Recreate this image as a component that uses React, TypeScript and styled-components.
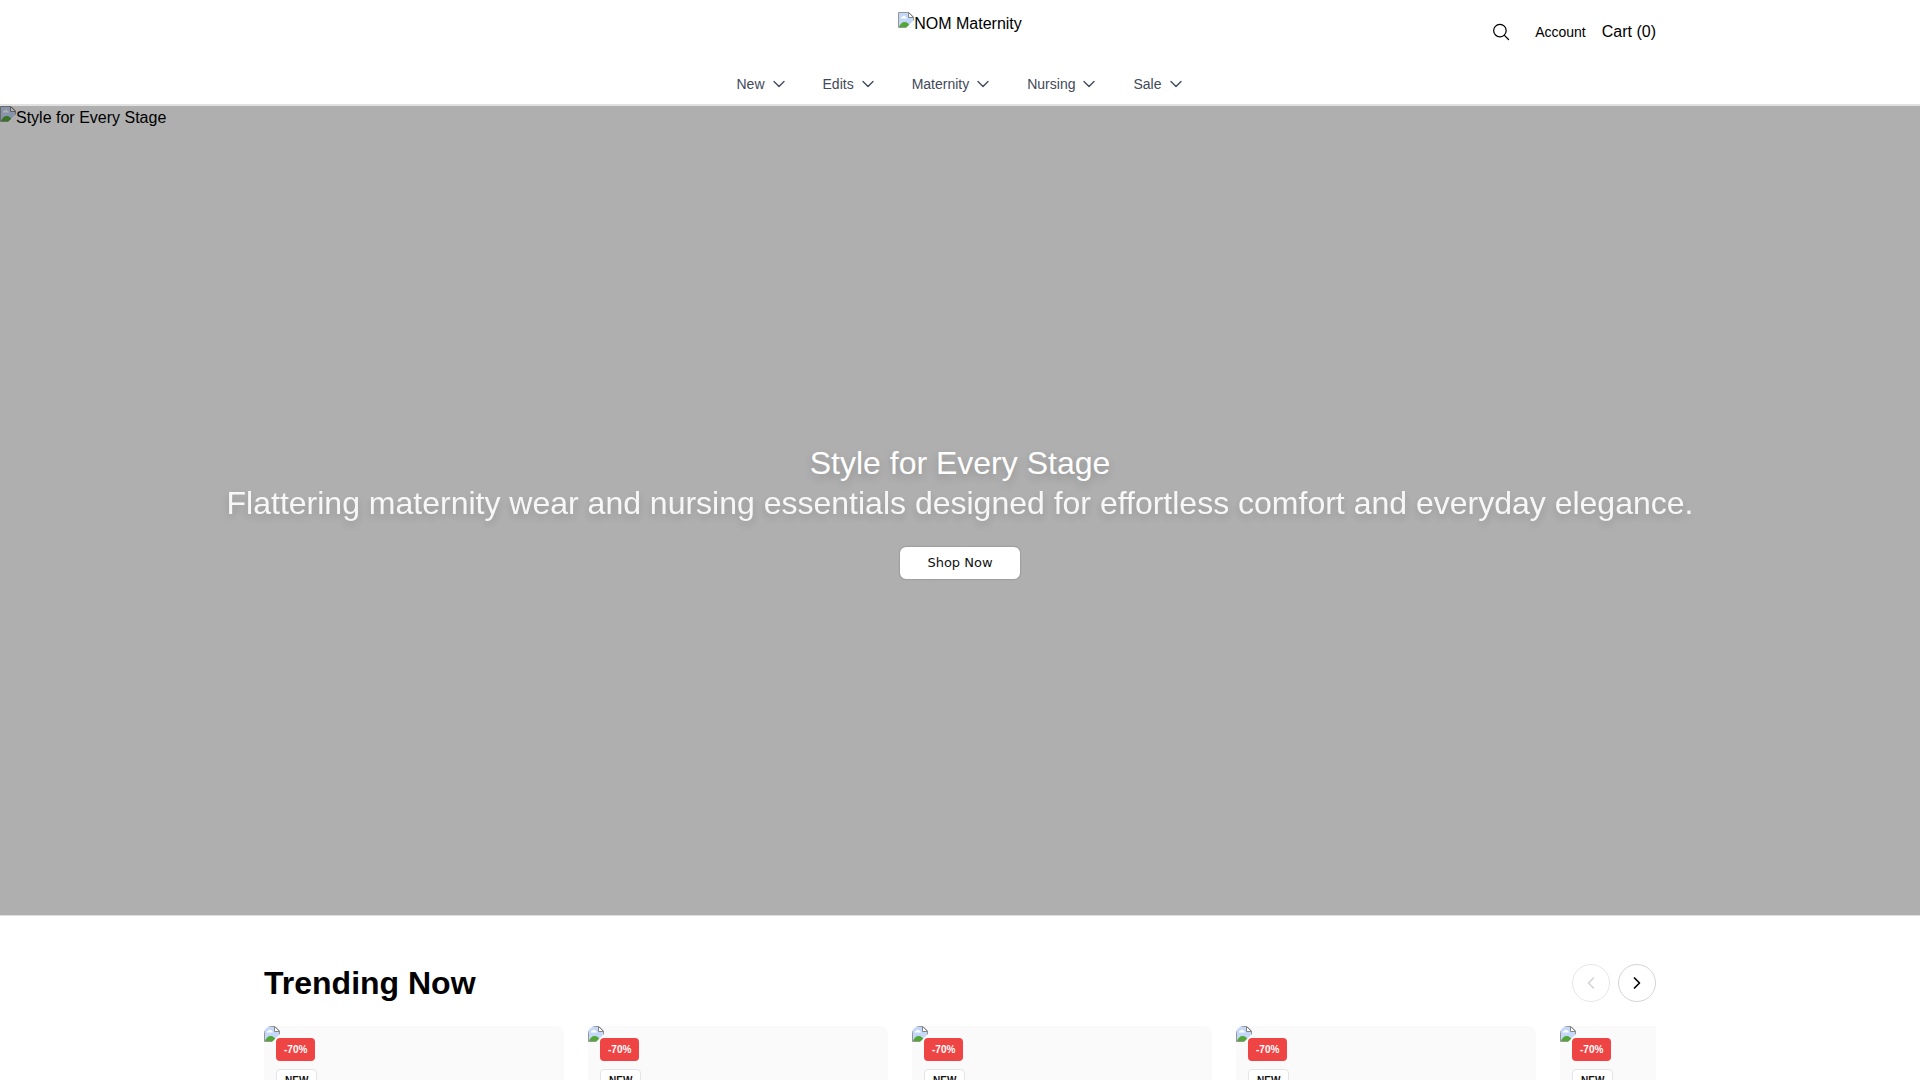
import React from "react";
import styled, { createGlobalStyle } from "styled-components";

const GlobalStyle = createGlobalStyle`
  *, *::before, *::after { box-sizing: border-box; }
  body {
    margin: 0;
    background: #fff;
    color: #000;
    font-family: "Liberation Sans", Arial, sans-serif;
    font-size: 16px;
    line-height: 24px;
  }
  h1, h2, p, ul { margin: 0; padding: 0; }
  button { font-family: inherit; cursor: pointer; }
  a { color: inherit; text-decoration: none; }
  html { scrollbar-width: none; }
`;

const Container = styled.div`
  width: 100%;
  max-width: 1440px;
  margin: 0 auto;
  padding: 0 24px;
`;

const Header = styled.header`
  background: #fff;
  border-bottom: 2px solid #e1e1e1;
`;

const TopBar = styled(Container)`
  display: grid;
  grid-template-columns: 1fr auto 1fr;
  align-items: center;
  height: 64px;
`;

const Logo = styled.a`
  grid-column: 2;
  display: flex;
  height: 40px;
`;

const Missing = styled.span`
  display: flex;
  align-items: flex-start;
`;

const MissingIcon = styled.svg`
  display: block;
  flex: none;
  width: 16px;
  height: 16px;
`;

const Actions = styled.div`
  display: flex;
  align-items: center;
  justify-content: flex-end;
  gap: 16px;
`;

const SearchButton = styled.button`
  display: flex;
  padding: 8px;
  border: 0;
  background: none;
  color: #000;
`;

const AccountLink = styled.a`
  font-size: 14px;
`;

const CartButton = styled.button`
  padding: 0;
  border: 0;
  background: none;
  color: #000;
  font-size: 16px;
  line-height: 24px;
`;

const Nav = styled.nav`
  display: flex;
  justify-content: center;
  gap: 36px;
  height: 40px;
`;

const NavButton = styled.button`
  display: flex;
  align-items: center;
  gap: 6px;
  padding: 0;
  border: 0;
  background: none;
  color: #3f495a;
  font-size: 14px;
  line-height: 20px;
`;

const Hero = styled.section`
  display: grid;
  height: 75vh;
  min-height: 400px;
  background: #afafaf;
  border-bottom: 1px solid #dfdfdf;

  > * { grid-area: 1 / 1; }
`;

const HeroImage = styled.div`
  justify-self: start;
  svg { filter: brightness(0.69); }
`;

const HeroContent = styled.div`
  display: flex;
  flex-direction: column;
  align-items: center;
  justify-content: center;
  padding: 0 24px;
  text-align: center;
  color: #fff;
`;

const HeroTitle = styled.h1`
  font-size: 32px;
  font-weight: 400;
  line-height: 40px;
  text-shadow: 0 4px 8px rgba(0, 0, 0, 0.18);
`;

const HeroText = styled.p`
  margin-bottom: 24px;
  font-size: 32px;
  line-height: 40px;
  opacity: 0.9;
  text-shadow: 0 4px 8px rgba(0, 0, 0, 0.18);
`;

const ShopButton = styled.button`
  && { font-family: "DejaVu Sans", Verdana, sans-serif; }
  min-width: 120px;
  height: 32px;
  padding: 0 24px;
  border: 0;
  border-radius: 6px;
  background: #fff;
  color: #111;
  font-size: 13px;
  box-shadow: 0 0 2px rgba(0, 0, 0, 0.35);
`;

const Trending = styled(Container)`
  padding-top: 48px;
`;

const SectionHead = styled.div`
  display: flex;
  align-items: center;
  justify-content: space-between;
  height: 38px;
  margin-bottom: 24px;
`;

const SectionTitle = styled.h2`
  font-size: 32px;
  font-weight: 700;
  line-height: 40px;
`;

const Arrows = styled.div`
  display: flex;
  gap: 8px;
`;

const ArrowButton = styled.button`
  display: flex;
  align-items: center;
  justify-content: center;
  width: 38px;
  height: 38px;
  padding: 0;
  border: 1px solid #d1d5db;
  border-radius: 50%;
  background: #fff;
  color: #000;

  &:disabled {
    border-color: #e5e7eb;
    color: #d1d5db;
  }
`;

const Track = styled.ul`
  display: flex;
  gap: 24px;
  overflow: hidden;
  list-style: none;
`;

const Card = styled.li`
  display: grid;
  flex: 0 0 300px;
  height: 400px;
  overflow: hidden;
  border-radius: 8px;
  background: #fafafa;

  > * { grid-area: 1 / 1; }
`;

const Badges = styled.div`
  display: flex;
  flex-direction: column;
  align-items: flex-start;
  gap: 8px;
  padding: 12px;
`;

const Badge = styled.span<{ $sale?: boolean }>`
  padding: ${(p) => (p.$sale ? "4px 8px" : "3px 8px")};
  border: ${(p) => (p.$sale ? "0" : "1px solid #e5e5e5")};
  border-radius: 4px;
  background: ${(p) => (p.$sale ? "#ef4444" : "#fff")};
  color: ${(p) => (p.$sale ? "#fff" : "#111")};
  font-size: 10px;
  font-weight: 700;
  line-height: 15px;
`;

const BrokenPicture = () => (
  <MissingIcon viewBox="0 0 16 16" aria-hidden="true">
    <path d="M.5.500H11l4.500 4.500v10.500H.5z" fill="#fff" />
    <path d="M1 1H10.500v4.500h4.500V15H1z" fill="#c3d7f8" />
    <path d="M3 6.500c-.3-1.200.7-1.900 1.500-1.700C5 3.200 7.300 3.400 7.500 5 8.600 4.800 9 5.800 8.700 6.500z" fill="#fff" />
    <path d="M1 15c1-3 3-5 5.700-5 2.300 0 4.600 1.800 5.600 5z" fill="#52a836" />
    <path d="M.5 15.500V.5H11l4.500 4.500v10.500z" fill="none" stroke="#969696" />
    <path d="M10.500.5v5h5z" fill="#fff" stroke="#858585" />
    <path d="M16 8v4L12 16H8z" fill="#fff" />
    <path d="M16 12v4h-4z" fill="#fff" />
  </MissingIcon>
);

const Chevron = ({ d, size = 16, stroke = 2 }: { d: string; size?: number; stroke?: number }) => (
  <svg width={size} height={size} viewBox="0 0 24 24" fill="none" stroke="currentColor"
    strokeWidth={stroke} strokeLinecap="round" strokeLinejoin="round" aria-hidden="true">
    <path d={d} />
  </svg>
);

const links = ["New", "Edits", "Maternity", "Nursing", "Sale"];
const products = [1, 2, 3, 4, 5];

export default function App() {
  return (
    <>
      <GlobalStyle />
      <Header>
        <TopBar>
          <Logo href="#">
            <Missing><BrokenPicture />NOM Maternity</Missing>
          </Logo>
          <Actions>
            <SearchButton type="button" aria-label="Search">
              <svg width="20" height="20" viewBox="0 0 24 24" fill="none" stroke="currentColor"
                strokeWidth="1.5" strokeLinecap="round" strokeLinejoin="round" aria-hidden="true">
                <path d="m21 21-5.200-5.200m0 0A7.500 7.500 0 1 0 5.200 5.200a7.500 7.500 0 0 0 10.600 10.600Z" />
              </svg>
            </SearchButton>
            <AccountLink href="#">Account</AccountLink>
            <CartButton type="button">Cart (0)</CartButton>
          </Actions>
        </TopBar>
        <Nav aria-label="Main">
          {links.map((label) => (
            <NavButton key={label} type="button">
              {label}
              <Chevron d="m19.500 8.250-7.500 7.500-7.500-7.500" />
            </NavButton>
          ))}
        </Nav>
      </Header>
      <main>
        <Hero>
          <HeroImage>
            <Missing><BrokenPicture />Style for Every Stage</Missing>
          </HeroImage>
          <HeroContent>
            <HeroTitle>Style for Every Stage</HeroTitle>
            <HeroText>
              Flattering maternity wear and nursing essentials designed for effortless comfort and everyday elegance.
            </HeroText>
            <ShopButton type="button">Shop Now</ShopButton>
          </HeroContent>
        </Hero>
        <Trending as="section">
          <SectionHead>
            <SectionTitle>Trending Now</SectionTitle>
            <Arrows>
              <ArrowButton type="button" aria-label="Previous" disabled>
                <Chevron d="m15 18-6-6 6-6" size={20} />
              </ArrowButton>
              <ArrowButton type="button" aria-label="Next">
                <Chevron d="m9 18 6-6-6-6" size={20} />
              </ArrowButton>
            </Arrows>
          </SectionHead>
          <Track>
            {products.map((id) => (
              <Card key={id}>
                <BrokenPicture />
                <Badges>
                  <Badge $sale>-70%</Badge>
                  <Badge>NEW</Badge>
                </Badges>
              </Card>
            ))}
          </Track>
        </Trending>
      </main>
    </>
  );
}
